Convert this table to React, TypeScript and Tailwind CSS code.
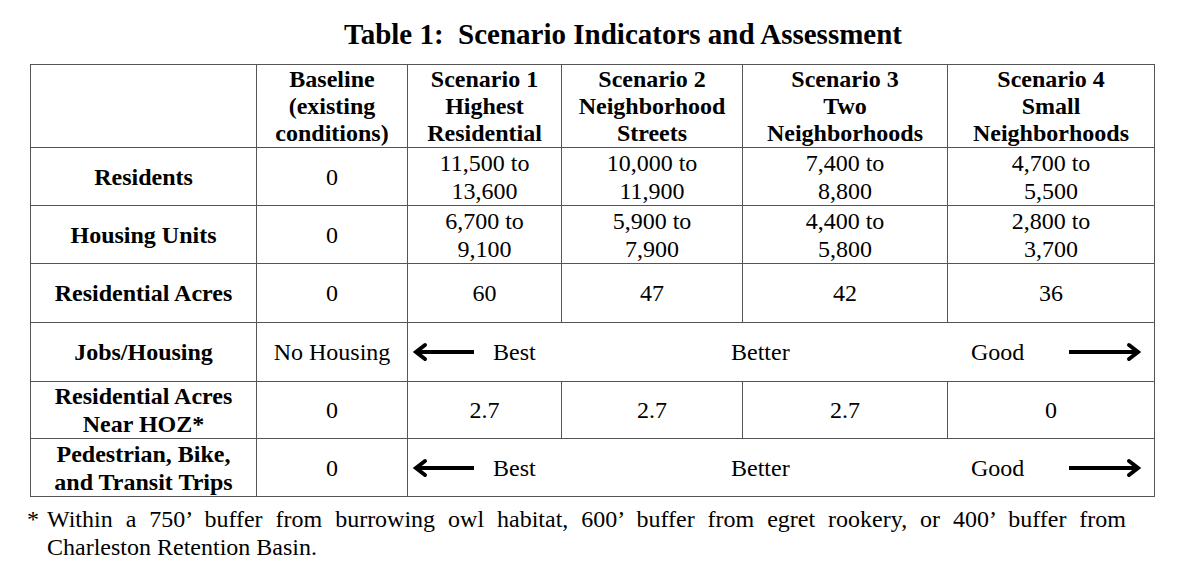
import React from "react";

type Row = {
  label: string[];
  h: string;
  cells: string[][];
};

const rows: Row[] = [
  {
    label: ["Residents"],
    h: "h-[58px]",
    cells: [["0"], ["11,500 to", "13,600"], ["10,000 to", "11,900"], ["7,400 to", "8,800"], ["4,700 to", "5,500"]],
  },
  {
    label: ["Housing Units"],
    h: "h-[58px]",
    cells: [["0"], ["6,700 to", "9,100"], ["5,900 to", "7,900"], ["4,400 to", "5,800"], ["2,800 to", "3,700"]],
  },
  {
    label: ["Residential Acres"],
    h: "h-[59px]",
    cells: [["0"], ["60"], ["47"], ["42"], ["36"]],
  },
];

function LeftArrow() {
  return (
    <svg width="62" height="20" viewBox="0 0 62 20" className="shrink-0">
      <line x1="5" y1="10" x2="62" y2="10" stroke="#000" strokeWidth="4" />
      <polyline points="13,3 4,10 13,17" fill="none" stroke="#000" strokeWidth="4" strokeLinecap="round" />
    </svg>
  );
}

function RightArrow() {
  return (
    <svg width="73" height="20" viewBox="0 0 73 20" className="shrink-0">
      <line x1="0" y1="10" x2="68" y2="10" stroke="#000" strokeWidth="4" />
      <polyline points="60,3 69,10 60,17" fill="none" stroke="#000" strokeWidth="4" strokeLinecap="round" />
    </svg>
  );
}

// the merged "Best / Better / Good" span across the four scenarios
function Scale() {
  return (
    <div className="flex items-center pl-[4px]">
      <LeftArrow />
      <span className="w-[257px] pl-[19px] text-left">Best</span>
      <span className="w-[240px] text-left">Better</span>
      <span className="w-[98px] text-left">Good</span>
      <RightArrow />
    </div>
  );
}

function Lines({ lines }: { lines: string[] }) {
  return (
    <>
      {lines.map((l, i) => (
        <div key={i}>{l}</div>
      ))}
    </>
  );
}

const cell = "border border-[#555] p-0 text-center align-middle";

export default function App() {
  return (
    <div className="w-[1200px] h-[576px] bg-white text-black font-['Liberation_Serif','Times_New_Roman',serif] overflow-hidden">
      <div className="pt-[17px] pl-[46px] text-center">
        <h1 className="h-[34px] leading-[34px] text-[29px] font-bold whitespace-pre">
          Table 1:  Scenario Indicators and Assessment
        </h1>
      </div>

      <table className="mt-[13px] ml-[30px] w-[1124px] table-fixed border-collapse text-[24px] leading-[28px]">
        <colgroup>
          <col className="w-[226px]" />
          <col className="w-[151px]" />
          <col className="w-[154px]" />
          <col className="w-[181px]" />
          <col className="w-[205px]" />
          <col className="w-[207px]" />
        </colgroup>
        <thead>
          <tr className="h-[83px] font-bold leading-[27px]">
            <th className={cell}></th>
            <th className={cell}>
              <Lines lines={["Baseline", "(existing", "conditions)"]} />
            </th>
            <th className={cell}>
              <Lines lines={["Scenario 1", "Highest", "Residential"]} />
            </th>
            <th className={cell}>
              <Lines lines={["Scenario 2", "Neighborhood", "Streets"]} />
            </th>
            <th className={cell}>
              <Lines lines={["Scenario 3", "Two", "Neighborhoods"]} />
            </th>
            <th className={cell}>
              <Lines lines={["Scenario 4", "Small", "Neighborhoods"]} />
            </th>
          </tr>
        </thead>
        <tbody>
          {rows.map((r) => (
            <tr key={r.label[0]} className={r.h}>
              <td className={cell + " font-bold"}>
                <Lines lines={r.label} />
              </td>
              {r.cells.map((c, i) => (
                <td key={i} className={cell}>
                  <Lines lines={c} />
                </td>
              ))}
            </tr>
          ))}
          <tr className="h-[59px]">
            <td className={cell + " font-bold"}>Jobs/Housing</td>
            <td className={cell}>No Housing</td>
            <td className={cell} colSpan={4}>
              <Scale />
            </td>
          </tr>
          <tr className="h-[55px]">
            <td className={cell + " font-bold"}>
              <Lines lines={["Residential Acres", "Near HOZ*"]} />
            </td>
            <td className={cell}>0</td>
            <td className={cell}>2.7</td>
            <td className={cell}>2.7</td>
            <td className={cell}>2.7</td>
            <td className={cell}>0</td>
          </tr>
          <tr className="h-[58px]">
            <td className={cell + " font-bold"}>
              <Lines lines={["Pedestrian, Bike,", "and Transit Trips"]} />
            </td>
            <td className={cell}>0</td>
            <td className={cell} colSpan={4}>
              <Scale />
            </td>
          </tr>
        </tbody>
      </table>

      <div className="mt-[8px] ml-[27px] flex text-[24px] leading-[28px]">
        <span className="w-[20px] shrink-0">*</span>
        <div className="w-[1079px]">
          <div className="text-justify [text-align-last:justify]">
            Within a 750’ buffer from burrowing owl habitat, 600’ buffer from egret rookery, or 400’ buffer from
          </div>
          <div>Charleston Retention Basin.</div>
        </div>
      </div>
    </div>
  );
}
